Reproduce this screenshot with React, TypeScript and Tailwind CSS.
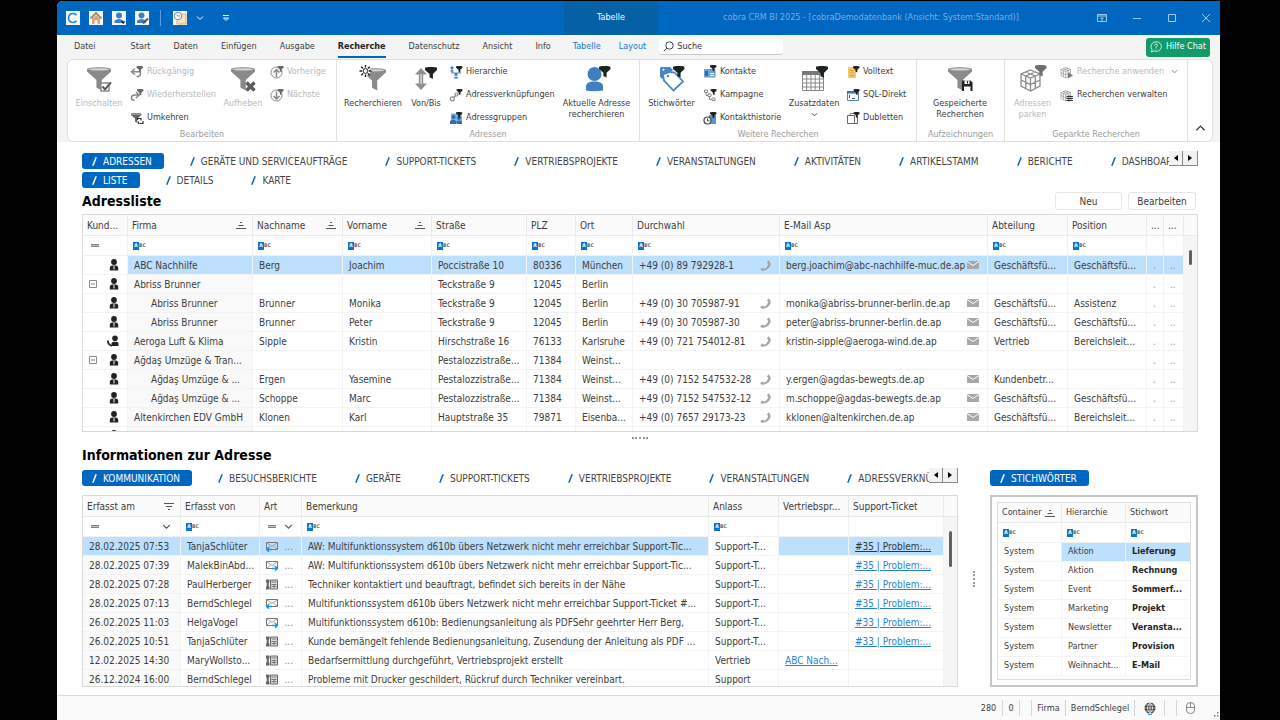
import type { ReactNode } from "react";

/* ---------- icons ---------- */

const Funnel = ({ x = 0, y = 0, s = 1, color = "#8a8a8a" }) => (
  <g transform={`translate(${x} ${y}) scale(${s})`}>
    <path d="M0 2.5C0-.6 24-.6 24 2.5V4.5L14.8 13V23.5L9.4 20.5V13L0 4.5Z" fill={color} />
    <ellipse cx="12" cy="2.4" rx="10" ry="1.2" fill="#fff" opacity="0.65" />
  </g>
);

const MiniFunnel = ({ x = 0, y = 0, s = 1, color = "#1c2420" }) => (
  <path
    transform={`translate(${x} ${y}) scale(${s})`}
    d="M0 1C0-.2 10-.2 10 1V2.5L6.6 5.8V10L3.8 8.6V5.8L0 2.5Z"
    fill={color}
  />
);

const Big = ({ children }: { children: ReactNode }) => (
  <svg className="w-7 h-7 shrink-0" viewBox="0 0 28 28" fill="none">
    {children}
  </svg>
);

const Small = ({ children }: { children: ReactNode }) => (
  <svg className="w-[14px] h-[14px] shrink-0" viewBox="0 0 14 14" fill="none">
    {children}
  </svg>
);

const EnableIcon = () => (
  <Big>
    <Funnel x={2} y={2} />
    <path d="M16 18h8v8h-8z" fill="#fff" stroke="#8a8a8a" strokeWidth="1.4" />
    <path d="M17.5 21.5l2.5 2.8 6-7" stroke="#555" strokeWidth="2" />
  </Big>
);

const ClearIcon = () => (
  <Big>
    <Funnel x={2} y={2} />
    <path d="M17.5 17.5l8 8m0-8l-8 8" stroke="#5c5c5c" strokeWidth="3.4" />
  </Big>
);

const SearchFunnelIcon = () => (
  <Big>
    <Funnel x={4} y={3} s={0.96} />
    <circle cx="6.5" cy="6" r="5" fill="#fff" />
    <path
      d="M6.5 0v2.6M6.5 9.400V12M.5 6h2.600M9.900 6h2.600M2.200 1.700l1.900 1.900M8.900 8.400l1.900 1.900M10.800 1.700L8.900 3.600M4.100 8.400l-1.900 1.900"
      stroke="#222"
      strokeWidth="1.4"
    />
    <circle cx="6.5" cy="6" r="2.4" fill="#fff" stroke="#222" strokeWidth="1" />
  </Big>
);

const RangeIcon = () => (
  <Big>
    <path d="M9 3l6 6.5h-3.800v9H15L9 25l-6-6.5h3.800v-9H3Z" fill="#8f8f8f" />
    <path d="M9 9v10" stroke="#fff" strokeWidth="1" />
    <MiniFunnel x={13} y={2} s={1.2} />
  </Big>
);

const PersonSearchIcon = () => (
  <Big>
    <circle cx="11.5" cy="9" r="7" fill="#4080c0" />
    <path d="M3 25.5v-4c0-3.500 3-5 8.500-5s8.500 1.500 8.500 5v4q-8.500 1.600-17 0Z" fill="#4080c0" />
    <MiniFunnel x={16} y={1} s={1.15} />
  </Big>
);

const TagsIcon = () => (
  <Big>
    <path d="M3 2h9l3 3-11 9-2-2.500V3Z" fill="#4a86c6" />
    <path d="M5 9.500L12 7l4.500.500L25 16.500 15.500 25.500 6 15.500Z" fill="#fff" stroke="#4a86c6" strokeWidth="1.800" />
    <circle cx="10" cy="11" r="1.300" fill="#4a86c6" />
    <circle cx="5.500" cy="4.800" r="1" fill="#fff" />
    <MiniFunnel x={15} y={1} s={1.15} />
  </Big>
);

const TableFunnelIcon = () => (
  <Big>
    <path d="M2.500 6.500h21v19h-21z" fill="#fff" stroke="#888" />
    <path d="M2 6h22v4H2z" fill="#777" />
    <path d="M2 14h22M2 18h22M2 22h22M6.700 9v17M11 9v17M15.200 9v17M19.500 9v17" stroke="#888" />
    <MiniFunnel x={16} y={1} s={1.2} />
  </Big>
);

const SavedIcon = () => (
  <Big>
    <Funnel x={2} y={2} />
    <path d="M16 15.500h8.500l2 2V26H16z" fill="#222" />
    <path d="M18.500 15.500h5v3.500h-5zM18 21.500h6.500V26H18z" fill="#fff" />
    <path d="M21.500 16v2.500" stroke="#222" />
  </Big>
);

const CubeShape = () => (
  <path
    d="M11.500 5L21 9v12l-9.500 5L2 21V9ZM2 9l9.500 4L21 9M11.500 13v13M2 15l9.500 4.500L21 15M6.700 11v12.500M16.300 11v12.500M6.700 7l9.600 4M16.300 7l-9.600 4"
    stroke="#8a8a8a"
    strokeWidth="1.300"
  />
);

const ParkIcon = () => (
  <Big>
    <CubeShape />
    <MiniFunnel x={16} y={0} s={1.15} color="#6e6e6e" />
  </Big>
);

const UndoIcon = () => (
  <Small>
    <path d="M5 3.800L1.500 6.800 5 9.800M2 6.800h7q1.500 0 1.500 2T8 11.500H6.500" stroke="#888" strokeWidth="1.500" />
    <MiniFunnel x={6.5} y={1} s={0.65} color="#666" />
  </Small>
);

const RedoIcon = () => (
  <Small>
    <path d="M4.500 12.300H3.500Q1.300 12 1.500 9.500T4.500 7h4M6 4l3.200 3L6 10" stroke="#888" strokeWidth="1.500" />
    <MiniFunnel x={7} y={1} s={0.65} color="#666" />
  </Small>
);

const InvertIcon = () => (
  <Small>
    <Funnel x={1} y={2} s={0.43} color="#666" />
    <path d="M7.500 9V7.500H11v2M13 10v2.500H9.500M8.500 10.500v2.500" stroke="#333" strokeWidth="1.200" />
  </Small>
);

const CircleArrowIcon = ({ up = false }) => (
  <Small>
    <circle cx="6.500" cy="7.500" r="5.500" stroke="#888" />
    <path d={up ? "M6.500 12V4.500M3.500 7.500l3-3 3 3" : "M6.500 3.500V11M3.500 8l3 3 3-3"} stroke="#888" strokeWidth="1.500" />
    <MiniFunnel x={7.5} y={1} s={0.62} color="#666" />
  </Small>
);

const HierarchyIcon = () => (
  <Small>
    <path d="M3 4.500v3.500h8V6.500M7 8v3" stroke="#4080c0" strokeWidth="1.200" />
    <circle cx="3" cy="2.800" r="1.600" fill="#4080c0" />
    <path d="M.800 6.500Q3 3.500 5.200 6.500Z" fill="#4080c0" />
    <circle cx="7" cy="9.500" r="1.600" fill="#4080c0" />
    <path d="M4.500 13.500Q7 9.500 9.500 13.500Z" fill="#4080c0" />
    <MiniFunnel x={7} y={1} s={0.65} />
  </Small>
);

const LinkIcon = () => (
  <Small>
    <circle cx="3.300" cy="10.800" r="2" stroke="#888" strokeWidth="1.200" />
    <circle cx="7.500" cy="6.500" r="1.500" stroke="#888" strokeWidth="1.200" />
    <path d="M4.800 9.500l2-2" stroke="#888" strokeWidth="1.200" />
    <MiniFunnel x={7.500} y={1} s={0.6} />
  </Small>
);

const GroupsIcon = () => (
  <Small>
    <path d="M2 2.500h11v10H2z" fill="#7fb0de" />
    <circle cx="4.500" cy="6" r="2" fill="#2f6eb3" />
    <circle cx="10" cy="7" r="2" fill="#2f6eb3" />
    <path d="M1 13V10q3.500-2.500 6 0v3ZM7.500 13v-2.500q3-2 5.500 0V13Z" fill="#2f6eb3" />
    <MiniFunnel x={7} y={1} s={0.62} />
  </Small>
);

const ContactsIcon = () => (
  <Small>
    <path d="M1 4h11.500v8.500H1z" fill="#6aa2d8" />
    <path d="M2 6h3v5H2z" fill="#2f6eb3" />
    <path d="M7 8.500h4M7 10.500h4" stroke="#fff" />
    <MiniFunnel x={7} y={0} s={0.65} />
  </Small>
);

const CampaignIcon = () => (
  <Small>
    <path d="M1.500 2h3v2.500h-3zM5 6h3v2.500H5zM9 10h3v2.500H9zM3 4.500v3h2M6.500 8.500v3H9" stroke="#8a8a8a" />
    <MiniFunnel x={7.500} y={1} s={0.62} />
  </Small>
);

const HistoryIcon = () => (
  <Small>
    <path d="M6 4h7v9H6z" fill="#5b96d2" />
    <circle cx="4.500" cy="9.500" r="3.500" fill="#fff" stroke="#444" strokeWidth="1.200" />
    <path d="M4.500 7.500v2.300h2" stroke="#444" />
    <MiniFunnel x={7} y={1} s={0.65} />
  </Small>
);

const FullTextIcon = () => (
  <Small>
    <path d="M2 2h8v11H2z" fill="#f5c96b" />
    <path d="M3.500 5.500h4M3.500 8h5M3.500 10.500h5" stroke="#cfa24a" />
    <MiniFunnel x={7} y={1} s={0.65} />
  </Small>
);

const SqlIcon = () => (
  <Small>
    <path d="M1.500 3.500h11v9h-11z" fill="#fff" stroke="#4a86c6" />
    <path d="M1 3h11v2.500H1z" fill="#3372b8" />
    <path d="M3.500 7v3M6 10.500h3" stroke="#555" />
    <MiniFunnel x={7.500} y={1} s={0.62} />
  </Small>
);

const DuplicatesIcon = () => (
  <Small>
    <path d="M1.500 4.500h7v8h-7zM8.500 12.500h3v-8" stroke="#666" />
    <path d="M4 4V2.500h4" stroke="#888" />
    <MiniFunnel x={7.500} y={1} s={0.62} />
  </Small>
);

const SmallCube = ({ play = false }) => (
  <Small>
    <g transform="scale(.5)">
      <CubeShape />
    </g>
    {play ? (
      <path d="M8 7.500v6l5-3z" fill="#777" />
    ) : (
      <path d="M6.500 8.500h6.500M6.500 10.500h6.500M6.500 12.500h6.500M9 7.500v2M11 9.500v2M9 11.500v2" stroke="#333" />
    )}
  </Small>
);

const Chevron = ({ className = "w-2 h-2", up = false }) => (
  <svg className={className} viewBox="0 0 8 8" fill="none" stroke="currentColor" strokeWidth="1">
    <path d={up ? "M1 6l3-3 3 3" : "M1 2.500l3 3 3-3"} />
  </svg>
);

const SortIcon = () => (
  <svg className="w-[10px] h-2 shrink-0" viewBox="0 0 10 8" stroke="#555" strokeWidth="1">
    <path d="M4 1.500h2M2.500 4.500h5M0 7.500h10" />
  </svg>
);

const SortFilterIcon = () => (
  <svg className="w-[10px] h-2 shrink-0" viewBox="0 0 10 8" stroke="#555" strokeWidth="1">
    <path d="M0 1.500h10M2 4.500h6M4 7.500h2" />
  </svg>
);

const PersonIcon = () => (
  <svg className="w-[10px] h-3 shrink-0" viewBox="0 0 10 12">
    <circle cx="5" cy="3" r="2.900" fill="#222" />
    <path d="M.800 11.500V8.800Q.800 6.800 3 6.600h4q2.200.200 2.200 2.200v2.700Z" fill="#222" />
    <path d="M5 7v3.500" stroke="#aaa" strokeWidth="1.600" />
  </svg>
);

const PersonPhoneIcon = () => (
  <svg className="w-3 h-3 shrink-0" viewBox="0 0 12 12">
    <circle cx="8" cy="3.200" r="2.800" fill="#222" />
    <path d="M4.500 11V8.500Q4.500 7 7 6.800h2q2.500.200 2.500 1.700V11Z" fill="#222" />
    <path d="M1 5.500q-.500 4 4 5.500" stroke="#222" strokeWidth="1.800" fill="none" />
  </svg>
);

const PhoneIcon = () => (
  <svg className="w-[11px] h-[11px] shrink-0" viewBox="0 0 11 11" fill="#a6a6a6">
    <path d="M8.300.300q3.300 2 2 5.500Q8 10.500 3 10.700q-2 0-2.800-1.500L2.700 7.600l1.600 1.200Q7.500 7.500 8.300 4L7 2.800Z" />
  </svg>
);

const MailIcon = () => (
  <svg className="w-3 h-2 shrink-0" viewBox="0 0 12 8">
    <path d="M0 0h12v8H0z" fill="#a8a8a8" />
    <path d="M0 .500l6 4 6-4" stroke="#fff" fill="none" />
  </svg>
);

const CollapseIcon = () => (
  <svg className="w-2 h-2" viewBox="0 0 8 8" fill="#fff" stroke="#8a8a8a">
    <path d="M.500.500h7v7h-7zM2 4h4" />
  </svg>
);

const EnvelopeIcon = ({ out = false }) => (
  <svg className="w-3 h-[11px] shrink-0" viewBox="0 0 12 11" fill="none">
    <path d="M.500 1.500h11v7H.500z" stroke="#777" />
    <path d="M.500 1.500l5.500 4 5.500-4M.500 8.500L4.500 5M11.500 8.500L7.500 5" stroke="#888" strokeWidth=".8" />
    <path
      d={out ? "M6 8.500h5M9 6.300l2.400 2.200L9 10.700" : "M6 8.500H1M3 6.300L.600 8.500 3 10.700"}
      stroke="#1c94dc"
      strokeWidth="1.400"
    />
  </svg>
);

const DeskPhoneIcon = () => (
  <svg className="w-3 h-[11px] shrink-0" viewBox="0 0 12 11">
    <path d="M0 .500h3.500v2.300L2.800 4v3l.700 1.200v2.300H0V8.200L.700 7V4L0 2.800Z" fill="#666" />
    <path d="M4.500 1h7v9h-7z" fill="#ddd" stroke="#666" />
    <path d="M5.500 3h5M5.500 5.500h5M5.500 7.500h5M8 5v4" stroke="#777" />
  </svg>
);

const AbcIcon = () => (
  <span className="flex items-center shrink-0 text-[5px] leading-none font-bold text-[#666]">
    <span className="flex w-[6px] h-2 items-center justify-center bg-[#0b74cf] text-white">A</span>
    BC
  </span>
);

const EqualsIcon = () => <span className="w-2 h-[3px] shrink-0 border-y border-[#808080] bg-[#c4c4c4]" />;

const QuickIcon = ({ children, label }: { children: ReactNode; label: string }) => (
  <button type="button" aria-label={label} className="flex w-[23px] h-[14px] justify-center">
    <svg className="w-[14px] h-[14px]" viewBox="0 0 14 14" fill="none">
      <path d="M0 0h14v14H0z" fill="#f6f9fd" />
      {children}
    </svg>
  </button>
);

/* ---------- ribbon ---------- */

type BigButtonProps = {
  icon: ReactNode;
  lines: string[];
  width: string;
  disabled?: boolean;
  menu?: boolean;
};

const BigButton = ({ icon, lines, width, disabled, menu }: BigButtonProps) => (
  <button
    type="button"
    disabled={disabled}
    className={`${width} flex flex-col shrink-0 items-center pt-[5px] disabled:text-[#b9b9b9]`}
  >
    {icon}
    <span className="mt-[5px] leading-[11px] whitespace-nowrap">
      {lines.map((line) => (
        <span key={line} className="block">
          {line}
        </span>
      ))}
    </span>
    {menu && <Chevron className="w-[7px] h-[7px] mt-[2px]" />}
  </button>
);

type SmallButtonProps = { icon: ReactNode; text: string; disabled?: boolean; menu?: boolean };

const SmallButton = ({ icon, text, disabled, menu }: SmallButtonProps) => (
  <button
    type="button"
    disabled={disabled}
    className="flex h-[23px] items-center gap-[3px] whitespace-nowrap disabled:text-[#b9b9b9]"
  >
    {icon}
    {text}
    {menu && <Chevron className="w-[7px] h-[7px] ml-1 text-[#777]" />}
  </button>
);

const RibbonGroup = ({ title, width, children }: { title: string; width: string; children: ReactNode }) => (
  <div className={`${width} flex flex-col shrink-0 border-r border-[#e2e2e2]`}>
    <div className="flex h-[68px] items-start">{children}</div>
    <div className="h-[13px] leading-[13px] text-center text-[#9b9b9b]">{title}</div>
  </div>
);

/* ---------- tab strips ---------- */

const TabStrip = ({ tabs, scroll = false }: { tabs: string[]; scroll?: boolean }) => (
  <div className="flex w-full h-4 items-start">
    <div className="flex flex-1 min-w-0 gap-4 overflow-hidden" role="tablist">
      {tabs.map((tab, i) => (
        <button
          key={tab}
          type="button"
          role="tab"
          aria-selected={i === 0}
          className={`flex h-4 shrink-0 items-center gap-[6px] pl-[10px] pr-3 rounded-[3px] whitespace-nowrap ${
            i === 0 ? "bg-[#0067c0] text-white" : "text-[#444]"
          }`}
        >
          <svg className={i === 0 ? "w-[5px] h-[9px] text-white" : "w-[5px] h-[9px] text-[#0067c0]"} viewBox="0 0 5 9">
            <path d="M4.200.300L.800 8.700" stroke="currentColor" strokeWidth="1.500" />
          </svg>
          {tab}
        </button>
      ))}
    </div>
    {scroll && (
      <div className="flex shrink-0 self-start -mt-[2px]">
        <button
          type="button"
          aria-label="Zurück blättern"
          className="flex w-[14px] h-[15px] items-center justify-center bg-[#f2f2f2] border-r border-b border-[#888]"
        >
          <svg className="w-[4px] h-[6px]" viewBox="0 0 4 6">
            <path d="M4 0v6L0 3z" />
          </svg>
        </button>
        <button
          type="button"
          aria-label="Weiter blättern"
          className="flex w-[15px] h-[15px] items-center justify-center bg-[#f2f2f2] border-r border-b border-[#888]"
        >
          <svg className="w-[4px] h-[6px]" viewBox="0 0 4 6">
            <path d="M0 0v6l4-3z" />
          </svg>
        </button>
      </div>
    )}
  </div>
);

/* ---------- data grids ---------- */

type Column = {
  title: string;
  width: string;
  sort?: "asc" | "filter";
  filter?: "abc" | "equals" | "equalsMenu";
  // class for the body cells of this column
  body?: string;
  // stays white in the selected row
  plain?: boolean;
};

type GridProps = { columns: Column[]; rows: ReactNode[][]; compact?: boolean; label: string };

const Grid = ({ columns, rows, compact, label }: GridProps) => (
  <table aria-label={label} className="w-full table-fixed border-separate border-spacing-0">
    <colgroup>
      {columns.map((c, i) => (
        <col key={i} className={c.width} />
      ))}
    </colgroup>
    <thead>
      <tr>
        {columns.map((c, i) => (
          <th key={i} className="p-0 bg-[#fbfbfb] border-r border-b border-[#e9e9e9] font-normal text-left">
            <div className={`flex items-center justify-between pl-1 pr-[6px] whitespace-nowrap ${compact ? "h-[19px]" : "h-5"}`}>
              {c.title}
              {c.sort === "asc" && <SortIcon />}
              {c.sort === "filter" && <SortFilterIcon />}
            </div>
          </th>
        ))}
      </tr>
      <tr>
        {columns.map((c, i) => (
          <td key={i} className="p-0 border-r border-b border-[#f1f1f1]">
            <div className="flex h-[19px] items-center gap-1 pl-[5px] pr-[9px]">
              {c.filter === "abc" && <AbcIcon />}
              {c.filter && c.filter !== "abc" && (
                <span className="flex pl-[3px]">
                  <EqualsIcon />
                </span>
              )}
              {c.filter && (
                <input
                  type="text"
                  aria-label={`Filter ${c.title}`}
                  className="flex-1 min-w-0 h-3 bg-transparent outline-none"
                />
              )}
              {c.filter === "equalsMenu" && <Chevron className="w-[9px] h-[9px] shrink-0 text-[#555]" />}
            </div>
          </td>
        ))}
      </tr>
    </thead>
    <tbody>
      {rows.map((row, r) => (
        <tr key={r}>
          {columns.map((c, i) => (
            <td
              key={i}
              className={`p-0 border-r border-b border-[#f3f3f3] ${
                r === 0 && !c.plain ? "bg-[#bde0ff]" : c.body ?? ""
              }`}
            >
              <div className="flex h-[18px] items-center justify-between pl-[6px] pr-2 whitespace-nowrap overflow-hidden">
                {row[i]}
              </div>
            </td>
          ))}
        </tr>
      ))}
    </tbody>
  </table>
);

const Scrollbar = ({ thumb }: { thumb: string }) => (
  <div className="flex flex-col w-[13px] shrink-0 items-center bg-[#f5f5f5]">
    <div className="w-full h-[21px] shrink-0 bg-[#fbfbfb] border-b border-[#e9e9e9]" />
    <div className={`${thumb} w-[3px] shrink-0 rounded-full bg-[#606060]`} />
  </div>
);

const addressColumns: Column[] = [
  { title: "Kund...", width: "w-[45px]", filter: "equals", plain: true },
  { title: "Firma", width: "w-[125px]", sort: "asc", filter: "abc", body: "bg-[#f9f9f9]" },
  { title: "Nachname", width: "w-[90px]", sort: "asc", filter: "abc" },
  { title: "Vorname", width: "w-[89px]", sort: "asc", filter: "abc" },
  { title: "Straße", width: "w-[95px]", filter: "abc" },
  { title: "PLZ", width: "w-[49px]", filter: "abc" },
  { title: "Ort", width: "w-[57px]", filter: "abc" },
  { title: "Durchwahl", width: "w-[147px]", filter: "abc" },
  { title: "E-Mail Asp", width: "w-[208px]", filter: "abc" },
  { title: "Abteilung", width: "w-[80px]", filter: "abc" },
  { title: "Position", width: "w-[79px]", filter: "abc" },
  { title: "...", width: "w-[17px]" },
  { title: "...", width: "w-[20px]" },
];

// kind: "-" collapsible parent, ">" child row, "t" phone contact
const addresses = [
  ["", "ABC Nachhilfe", "Berg", "Joachim", "Poccistraße 10", "80336", "München", "+49 (0) 89 792928-1", "berg.joachim@abc-nachhilfe-muc.de.ap", "Geschäftsfü...", "Geschäftsfü..."],
  ["-", "Abriss Brunner", "", "", "Teckstraße 9", "12045", "Berlin", "", "", "", ""],
  [">", "Abriss Brunner", "Brunner", "Monika", "Teckstraße 9", "12045", "Berlin", "+49 (0) 30 705987-91", "monika@abriss-brunner-berlin.de.ap", "Geschäftsfü...", "Assistenz"],
  [">", "Abriss Brunner", "Brunner", "Peter", "Teckstraße 9", "12045", "Berlin", "+49 (0) 30 705987-30", "peter@abriss-brunner-berlin.de.ap", "Geschäftsfü...", "Geschäftsfü..."],
  ["t", "Aeroga Luft & Klima", "Sipple", "Kristin", "Hirschstraße 16", "76133", "Karlsruhe", "+49 (0) 721 754012-81", "kristin-sipple@aeroga-wind.de.ap", "Vertrieb", "Bereichsleit..."],
  ["-", "Ağdaş Umzüge & Tran...", "", "", "Pestalozzistraße...", "71384", "Weinst...", "", "", "", ""],
  [">", "Ağdaş Umzüge & ...", "Ergen", "Yasemine", "Pestalozzistraße...", "71384", "Weinst...", "+49 (0) 7152 547532-28", "y.ergen@agdas-bewegts.de.ap", "Kundenbetr...", ""],
  [">", "Ağdaş Umzüge & ...", "Schoppe", "Marc", "Pestalozzistraße...", "71384", "Weinst...", "+49 (0) 7152 547532-12", "m.schoppe@agdas-bewegts.de.ap", "Geschäftsfü...", "Geschäftsfü..."],
  ["", "Altenkirchen EDV GmbH", "Klonen", "Karl", "Hauptstraße 35", "79871", "Eisenba...", "+49 (0) 7657 29173-23", "kklonen@altenkirchen.de.ap", "Geschäftsfü...", "Bereichsleit..."],
  ["", "", "", "", "", "", "", "", "", "", ""],
];

const addressRows: ReactNode[][] = addresses.map(([kind, firma, nach, vor, str, plz, ort, tel, mail, abt, pos]) => [
  <>
    {kind === "-" ? (
      <button type="button" aria-label={`${firma} einklappen`}>
        <CollapseIcon />
      </button>
    ) : (
      <span />
    )}
    {kind === "t" ? <PersonPhoneIcon /> : <PersonIcon />}
  </>,
  <span className={kind === ">" ? "pl-[17px]" : ""}>{firma}</span>,
  nach,
  vor,
  str,
  plz,
  ort,
  tel && (
    <>
      {tel}
      <PhoneIcon />
    </>
  ),
  mail && (
    <>
      {mail}
      <MailIcon />
    </>
  ),
  abt,
  pos,
  firma && <span className="text-[#999]">.</span>,
  firma && <span className="text-[#999]">..</span>,
]);

const logColumns: Column[] = [
  { title: "Erfasst am", width: "w-[98px]", sort: "filter", filter: "equalsMenu", body: "bg-[#fafafa]" },
  { title: "Erfasst von", width: "w-[79px]", filter: "abc" },
  { title: "Art", width: "w-[42px]", filter: "equalsMenu" },
  { title: "Bemerkung", width: "w-[407px]", filter: "abc" },
  { title: "Anlass", width: "w-[70px]", filter: "abc", plain: true },
  { title: "Vertriebspr...", width: "w-[70px]" },
  { title: "Support-Ticket", width: "w-[95px]" },
];

const logs = [
  ["28.02.2025 07:53", "TanjaSchlüter", "in", "AW: Multifunktionssystem d610b übers Netzwerk nicht mehr erreichbar Support-Tic...", "Support-T...", "", "#35 | Problem:..."],
  ["28.02.2025 07:39", "MalekBinAbd...", "out", "AW: Multifunktionssystem d610b übers Netzwerk nicht mehr erreichbar Support-Tic...", "Support-T...", "", "#35 | Problem:..."],
  ["28.02.2025 07:28", "PaulHerberger", "tel", "Techniker kontaktiert und beauftragt, befindet sich bereits in der Nähe", "Support-T...", "", "#35 | Problem:..."],
  ["28.02.2025 07:13", "BerndSchlegel", "in", "Multifunktionssystem d610b übers Netzwerk nicht mehr erreichbar Support-Ticket #...", "Support-T...", "", "#35 | Problem:..."],
  ["26.02.2025 11:03", "HelgaVogel", "out", "Multifunktionssystem d610b: Bedienungsanleitung als PDFSehr geehrter Herr Berg,", "Support-T...", "", "#33 | Problem:..."],
  ["26.02.2025 10:51", "TanjaSchlüter", "tel", "Kunde bemängelt fehlende Bedienungsanleitung, Zusendung der Anleitung als PDF ...", "Support-T...", "", "#33 | Problem:..."],
  ["12.02.2025 14:30", "MaryWollsto...", "tel", "Bedarfsermittlung durchgeführt, Vertriebsprojekt erstellt", "Vertrieb", "ABC Nach...", ""],
  ["26.12.2024 16:00", "BerndSchlegel", "tel", "Probleme mit Drucker geschildert, Rückruf durch Techniker vereinbart.", "Support", "", ""],
];

const logRows: ReactNode[][] = logs.map(([am, von, art, text, anlass, projekt, ticket], i) => [
  am,
  von,
  <>
    {art === "tel" ? <DeskPhoneIcon /> : <EnvelopeIcon out={art === "out"} />}
    <span className="text-[#888]">...</span>
  </>,
  text,
  anlass,
  projekt && (
    <a href="#" className="underline text-[#2b83d0]">
      {projekt}
    </a>
  ),
  ticket && (
    <a href="#" className={i === 0 ? "underline text-[#333]" : "underline text-[#2b83d0]"}>
      {ticket}
    </a>
  ),
]);

const keywordColumns: Column[] = [
  { title: "Container", width: "w-[64px]", sort: "asc", filter: "abc", plain: true },
  { title: "Hierarchie", width: "w-[64px]", filter: "abc" },
  { title: "Stichwort", width: "w-[66px]", filter: "abc" },
];

const keywordRows: ReactNode[][] = [
  ["Aktion", "Lieferung"],
  ["Aktion", "Rechnung"],
  ["Event", "Sommerf..."],
  ["Marketing", "Projekt"],
  ["Newsletter", "Veransta..."],
  ["Partner", "Provision"],
  ["Weihnacht...", "E-Mail"],
].map(([hierarchie, wort]) => [
  "System",
  hierarchie,
  <b key={wort} className="text-[#222]">
    {wort}
  </b>,
]);

/* ---------- window ---------- */

const TitleBar = () => (
  <header className="flex h-[34px] items-center bg-[#0067c0]">
    <div className="flex w-[507px] items-center pl-1 text-white">
      <QuickIcon label="cobra">
        <path d="M10.500 4.200A4.500 4.500 0 1 0 10.500 9.800" stroke="#2489d8" strokeWidth="1.700" />
      </QuickIcon>
      <QuickIcon label="Startseite">
        <path d="M1.500 7.500L7 2l5.500 5.500" stroke="#8b7a6d" strokeWidth="1.600" />
        <path d="M3 7.500L7 4l4 3.500V13H8.500V9h-3v4H3Z" fill="#e0a56c" />
      </QuickIcon>
      <QuickIcon label="Neue Adresse">
        <circle cx="7" cy="4.500" r="3" fill="#3f7fc1" />
        <path d="M2.500 12V9.500Q7 6.500 11.500 9.500V12Z" fill="#3f7fc1" />
        <path d="M9 10.500h4.500L11.200 13z" fill="#111" />
      </QuickIcon>
      <QuickIcon label="Adresse bearbeiten">
        <circle cx="6.500" cy="4.500" r="3" fill="#3f7fc1" />
        <path d="M2 12V9.500Q6.500 6.500 11 9.500V12Z" fill="#3f7fc1" />
        <path d="M8 12.500l5-5" stroke="#555" strokeWidth="2" />
      </QuickIcon>
      <span className="w-px h-4 mx-[7px] bg-[#5aa0dd]" />
      <QuickIcon label="Verlauf">
        <path d="M6 3h7v10H4V9" fill="#f4e3bd" stroke="#dcb56a" />
        <circle cx="5" cy="5" r="3.700" fill="#fff" stroke="#7a8894" />
        <path d="M5 5L3.500 3.500M5 5h2" stroke="#7a8894" />
      </QuickIcon>
      <button type="button" aria-label="Weitere Verläufe" className="flex w-[18px] justify-center">
        <Chevron />
      </button>
      <button type="button" aria-label="Symbolleiste anpassen" className="flex w-[34px] justify-center">
        <svg className="w-2 h-2" viewBox="0 0 8 8" fill="none" stroke="currentColor">
          <path d="M1 1.500h6M1.500 4h5L4 6.500z" />
        </svg>
      </button>
    </div>
    <div className="flex w-[94px] h-full items-center justify-center bg-[#0560a5] text-white">Tabelle</div>
    <div className="flex-1 text-center whitespace-nowrap text-[#75afe4]">
      cobra CRM BI 2025 - [cobraDemodatenbank (Ansicht: System:Standard)]
    </div>
    <div className="flex text-[#a3cbee]">
      <button type="button" aria-label="Menüband-Optionen" className="flex w-[35px] justify-center">
        <svg className="w-[10px] h-[10px]" viewBox="0 0 10 10" fill="none" stroke="currentColor">
          <path d="M.500 1.500h9v7h-9zM.500 3h9M5 8V4.500M3.500 6L5 4.500 6.500 6" />
        </svg>
      </button>
      <button type="button" aria-label="Minimieren" className="flex w-[35px] justify-center">
        <svg className="w-[10px] h-[10px]" viewBox="0 0 10 10" stroke="currentColor">
          <path d="M1 5.500h8" />
        </svg>
      </button>
      <button type="button" aria-label="Maximieren" className="flex w-[35px] justify-center">
        <svg className="w-[10px] h-[10px]" viewBox="0 0 10 10" fill="none" stroke="currentColor">
          <path d="M1.500 1.500h7v7h-7z" />
        </svg>
      </button>
      <button type="button" aria-label="Schließen" className="flex w-[31px] pl-3">
        <svg className="w-[10px] h-[10px]" viewBox="0 0 10 10" stroke="currentColor">
          <path d="M1 1l8 8M9 1L1 9" />
        </svg>
      </button>
    </div>
  </header>
);

const menus = ["Start", "Daten", "Einfügen", "Ausgabe", "Recherche", "Datenschutz", "Ansicht", "Info"];

const MenuBar = () => (
  <nav className="flex h-6 items-center pl-[17px] pr-[10px] whitespace-nowrap">
    <button type="button" className="mr-[35px]">
      Datei
    </button>
    <div className="flex h-full items-center gap-[23px]">
      {menus.map((menu) =>
        menu === "Recherche" ? (
          <button key={menu} type="button" className="h-[22px] pt-[2px] font-bold text-[#222] border-b-2 border-[#0067c0]">
            {menu}
          </button>
        ) : (
          <button key={menu} type="button">
            {menu}
          </button>
        ),
      )}
    </div>
    <button type="button" className="ml-[22px] text-[#1b75c8]">
      Tabelle
    </button>
    <button type="button" className="ml-[18px] text-[#1b75c8]">
      Layout
    </button>
    <label className="flex w-[124px] h-4 items-center gap-[3px] ml-[13px] pl-1 bg-white rounded-[3px] border-b border-[#c8c8c8]">
      <svg className="w-[11px] h-[11px] shrink-0" viewBox="0 0 11 11" fill="none" stroke="#444">
        <circle cx="6.500" cy="4.500" r="3.700" />
        <path d="M3.800 7.200L.800 10.200" />
      </svg>
      <input
        type="text"
        aria-label="Suche"
        placeholder="Suche"
        className="w-full min-w-0 bg-transparent outline-none placeholder:text-[#333]"
      />
    </label>
    <button
      type="button"
      className="flex w-16 h-[19px] items-center justify-center gap-1 ml-auto rounded-[3px] bg-[#109b68] text-white"
    >
      <svg className="w-3 h-3" viewBox="0 0 12 12" fill="none" stroke="currentColor" strokeWidth=".8">
        <path d="M6 .800a5 4.800 0 1 1-2 9L1.500 11l.500-2.500A5 4.800 0 0 1 6 .800Z" />
        <path d="M4.600 4.500q0-1.400 1.400-1.400t1.400 1.300Q7.400 5.300 6 6v.800M6 7.600v.900" />
      </svg>
      Hilfe Chat
    </button>
  </nav>
);

const Ribbon = () => (
  <div className="flex h-[83px] ml-[10px] mr-[7px] overflow-hidden bg-white border border-[#dedede] rounded-[6px]">
    <RibbonGroup title="Bearbeiten" width="w-[269px]">
      <BigButton icon={<EnableIcon />} lines={["Einschalten"]} width="w-[62px]" disabled />
      <div className="w-[86px]">
        <SmallButton icon={<UndoIcon />} text="Rückgängig" disabled />
        <SmallButton icon={<RedoIcon />} text="Wiederherstellen" disabled />
        <SmallButton icon={<InvertIcon />} text="Umkehren" />
      </div>
      <BigButton icon={<ClearIcon />} lines={["Aufheben"]} width="w-[54px]" disabled />
      <div>
        <SmallButton icon={<CircleArrowIcon up />} text="Vorherige" disabled />
        <SmallButton icon={<CircleArrowIcon />} text="Nächste" disabled />
      </div>
    </RibbonGroup>
    <RibbonGroup title="Adressen" width="w-[303px]">
      <BigButton icon={<SearchFunnelIcon />} lines={["Recherchieren"]} width="w-[70px] pl-[2px]" />
      <BigButton icon={<RangeIcon />} lines={["Von/Bis"]} width="w-[42px] pr-1" />
      <div className="w-[109px]">
        <SmallButton icon={<HierarchyIcon />} text="Hierarchie" />
        <SmallButton icon={<LinkIcon />} text="Adressverknüpfungen" />
        <SmallButton icon={<GroupsIcon />} text="Adressgruppen" />
      </div>
      <BigButton icon={<PersonSearchIcon />} lines={["Aktuelle Adresse", "recherchieren"]} width="w-[77px]" />
    </RibbonGroup>
    <RibbonGroup title="Weitere Recherchen" width="w-[277px]">
      <BigButton icon={<TagsIcon />} lines={["Stichwörter"]} width="w-[63px]" />
      <div className="w-[79px]">
        <SmallButton icon={<ContactsIcon />} text="Kontakte" />
        <SmallButton icon={<CampaignIcon />} text="Kampagne" />
        <SmallButton icon={<HistoryIcon />} text="Kontakthistorie" />
      </div>
      <BigButton icon={<TableFunnelIcon />} lines={["Zusatzdaten"]} width="w-[64px]" menu />
      <div>
        <SmallButton icon={<FullTextIcon />} text="Volltext" />
        <SmallButton icon={<SqlIcon />} text="SQL-Direkt" />
        <SmallButton icon={<DuplicatesIcon />} text="Dubletten" />
      </div>
    </RibbonGroup>
    <RibbonGroup title="Aufzeichnungen" width="w-[88px]">
      <BigButton icon={<SavedIcon />} lines={["Gespeicherte", "Recherchen"]} width="w-[86px]" />
    </RibbonGroup>
    <RibbonGroup title="Geparkte Recherchen" width="w-[183px]">
      <BigButton icon={<ParkIcon />} lines={["Adressen", "parken"]} width="w-[55px]" disabled />
      <div>
        <SmallButton icon={<SmallCube play />} text="Recherche anwenden" disabled menu />
        <SmallButton icon={<SmallCube />} text="Recherchen verwalten" />
      </div>
    </RibbonGroup>
    <button type="button" aria-label="Menüband reduzieren" className="flex flex-1 items-end justify-center pb-2">
      <Chevron className="w-[11px] h-[11px]" up />
    </button>
  </div>
);

const StatusBar = () => (
  <footer className="flex h-[25px] items-center justify-end mt-2 border-t border-[#dcdcdc] bg-[#fafafa] text-center whitespace-nowrap">
    <span className="w-7 h-4 leading-4 border-r border-[#d5d5d5]">280</span>
    <span className="w-[17px] h-4 leading-4 border-r border-[#d5d5d5]">0</span>
    <span className="w-3 h-4 border-r border-[#d5d5d5]" />
    <span className="w-[34px] h-4 leading-4 border-r border-[#d5d5d5]">Firma</span>
    <span className="w-[69px] h-4 leading-4 border-r border-[#d5d5d5]">BerndSchlegel</span>
    <span className="flex w-[30px] h-4 items-center justify-center border-r border-[#d5d5d5]">
      <svg className="w-3 h-[13px]" viewBox="0 0 12 13" fill="none">
        <circle cx="6" cy="6" r="5.500" fill="#333" />
        <path d="M0 6h12M1.200 3h9.600M1.200 9h9.600M6 0v12M6 .500Q.800 6 6 11.500Q11.200 6 6 .500" stroke="#fff" strokeWidth=".7" />
        <path d="M4 12.500h4" stroke="#3c9be0" />
      </svg>
    </span>
    <span className="w-3 h-4 border-r border-[#d5d5d5]" />
    <span className="flex w-[26px] justify-center">
      <svg className="w-[9px] h-3" viewBox="0 0 9 12" fill="none" stroke="#888">
        <path d="M.500 4q0-3.500 4-3.500t4 3.500v4q0 3.500-4 3.500t-4-3.500ZM.500 5.500h8M4.500.500v5" />
      </svg>
    </span>
    <span className="flex w-[17px] h-full items-end justify-end">
      <svg className="w-[7px] h-[9px]" viewBox="0 0 7 9" fill="#777">
        <path d="M4 1h1.500v1.500H4zM1 4h1.500v1.500H1zM4 4h1.500v1.500H4z" />
      </svg>
    </span>
  </footer>
);

const App = function crmWindow() {
  return (
    <div className="min-h-screen pt-px pl-[57px] pr-[60px] bg-black font-['DejaVu_Sans_Condensed','Open_Sans',sans-serif] text-[9px] text-[#3c3c3c]">
      <div className="flex flex-col min-h-[719px] rounded-tl-[6px] overflow-hidden bg-white">
        <TitleBar />
        <div className="bg-[#f4f4f4]">
          <MenuBar />
          <Ribbon />
        </div>

        <main className="flex flex-col flex-1 pt-[11px] pl-[25px] pr-[22px] text-[10px]">
          <div className="flex flex-col gap-[3px]">
            <TabStrip
              scroll
              tabs={[
                "ADRESSEN",
                "GERÄTE UND SERVICEAUFTRÄGE",
                "SUPPORT-TICKETS",
                "VERTRIEBSPROJEKTE",
                "VERANSTALTUNGEN",
                "AKTIVITÄTEN",
                "ARTIKELSTAMM",
                "BERICHTE",
                "DASHBOARDS",
              ]}
            />
            <TabStrip tabs={["LISTE", "DETAILS", "KARTE"]} />
          </div>

          <div className="flex h-[26px] items-center justify-between">
            <h1 className="text-[14px] font-bold text-black">Adressliste</h1>
            <div className="flex gap-[6px] mr-[2px]">
              <button type="button" className="w-[67px] h-[18px] rounded-[3px] border border-[#e6e6e6] bg-white">
                Neu
              </button>
              <button type="button" className="w-[68px] h-[18px] rounded-[3px] border border-[#e6e6e6] bg-white">
                Bearbeiten
              </button>
            </div>
          </div>

          <div className="flex h-[218px] overflow-hidden border border-[#d9d9d9]">
            <div className="flex-1 min-w-0">
              <Grid label="Adressliste" columns={addressColumns} rows={addressRows} />
            </div>
            <Scrollbar thumb="mt-[14px] h-[15px]" />
          </div>

          <div className="flex h-3 items-center justify-center">
            <span className="w-4 border-t-2 border-dotted border-[#999]" />
          </div>

          <h2 className="h-[26px] leading-[22px] text-[14px] font-bold text-black">Informationen zur Adresse</h2>

          <div className="flex">
            <section className="flex flex-col flex-1 min-w-0 gap-[9px]">
              <TabStrip
                scroll
                tabs={[
                  "KOMMUNIKATION",
                  "BESUCHSBERICHTE",
                  "GERÄTE",
                  "SUPPORT-TICKETS",
                  "VERTRIEBSPROJEKTE",
                  "VERANSTALTUNGEN",
                  "ADRESSVERKNÜPFUNGEN",
                ]}
              />
              <div className="flex h-48 overflow-hidden border border-[#d9d9d9]">
                <div className="flex-1 min-w-0">
                  <Grid label="Kommunikation" columns={logColumns} rows={logRows} />
                </div>
                <Scrollbar thumb="mt-[14px] h-[36px]" />
              </div>
            </section>

            <div className="flex w-8 items-center justify-center">
              <span className="h-4 border-l-2 border-dotted border-[#999]" />
            </div>

            <section className="flex flex-col w-[208px] gap-[9px]">
              <TabStrip tabs={["STICHWÖRTER"]} />
              <div className="h-48 p-[5px] border-2 border-[#c6c6c6] text-[9px]">
                <div className="h-full overflow-hidden border border-[#dedede]">
                  <Grid label="Stichwörter" columns={keywordColumns} rows={keywordRows} compact />
                </div>
              </div>
            </section>
          </div>
        </main>

        <StatusBar />
      </div>
    </div>
  );
};

export default App;
